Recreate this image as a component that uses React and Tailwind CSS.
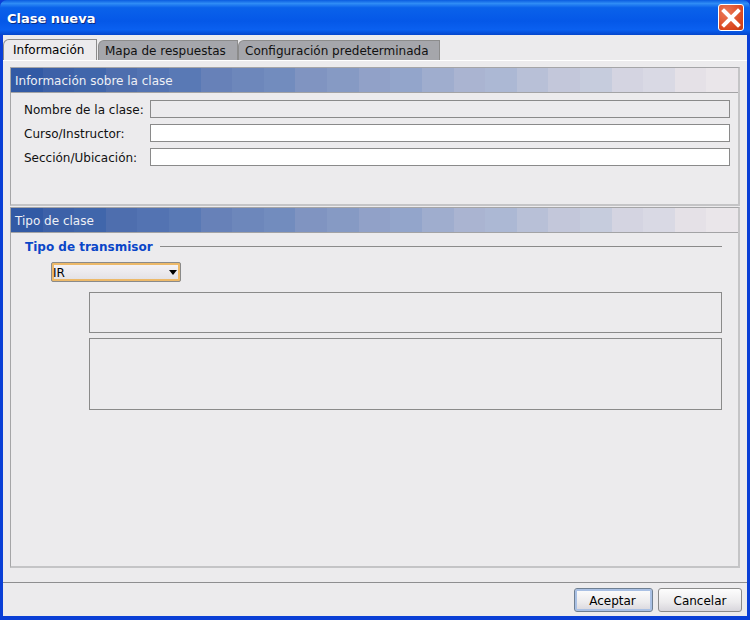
import React from "react";

const font = { fontFamily: '"DejaVu Sans", sans-serif' };

// the header gradient is drawn in faint bands
const bandCount = 23;
const nudge = [0, 1, -1, 1, 0, -1, 1, 0, -1, 1, 0, 1, -1, 0, 1, -1, 0, 1, -1, 1, 0, 1, 0];
const bands = Array.from({ length: bandCount }, (_, i) => {
  const t = i / (bandCount - 1);
  const r = Math.round(50 + (234 - 50) * t + nudge[i] * 3);
  const g = Math.round(90 + (230 - 90) * t + nudge[i]);
  const b = Math.round(165 + (234 - 165) * t);
  const from = ((i / bandCount) * 100).toFixed(2);
  const to = (((i + 1) / bandCount) * 100).toFixed(2);
  return `rgb(${r},${g},${b}) ${from}% ${to}%`;
});
const bandStyle = { background: `linear-gradient(90deg, ${bands.join(", ")})` };

function Tab({ label, active, className }) {
  return (
    <div
      className={`relative h-5 flex items-center border-t border-r border-[#8c8c8c] rounded-tl-[6px] border-l text-[12px] ${
        active ? "bg-[#ecebed] text-black h-[21px] border-b-0 z-10" : "bg-[#a5a6ab] text-[#111]"
      } ${className}`}
    >
      {label}
    </div>
  );
}

function SectionHeader({ children }) {
  return (
    <div style={bandStyle} className="h-[25px] flex items-center pl-1 pt-[2px] text-[12px] text-[#eef0f6] border-b border-[#a3a3a5]">
      {children}
    </div>
  );
}

function Field({ label, disabled }) {
  return (
    <div className="flex items-center h-[18px] mb-[6px]">
      <div className="w-[126px] pt-[2px] text-[12px] text-[#111] whitespace-nowrap">{label}</div>
      <div className={`h-[18px] flex-1 border border-[#8a8a8a] ${disabled ? "bg-[#ecebed]" : "bg-white"}`} />
    </div>
  );
}

export default function App() {
  return (
    <div style={font} className="w-[750px] h-[620px] flex flex-col bg-[#0a3fd6] overflow-hidden">
      {/* title bar */}
      <div className="h-[35px] shrink-0 flex items-center justify-between pl-[7px] pr-[6px] rounded-t-[7px] bg-[linear-gradient(180deg,#0a5ce0_0%,#2f8cf5_10%,#0a62ea_22%,#0558e8_60%,#0a60f0_85%,#0446cc_100%)]">
        <div className="pt-[2px] text-[13px] font-bold text-white [text-shadow:1px_1px_0_#0a2a80]">Clase nueva</div>
        <div className="w-[26px] h-[27px] rounded-[3px] border border-white bg-[radial-gradient(circle_at_30%_30%,#ec7a58,#d9461f_70%,#c23a14)] flex items-center justify-center">
          <svg width="24" height="24" viewBox="0 0 24 24">
            <path d="M5 5 L19 19 M19 5 L5 19" stroke="#ffffff" strokeWidth="4" strokeLinecap="square" fill="none" />
          </svg>
        </div>
      </div>

      {/* window body */}
      <div className="flex-1 flex flex-col mx-[3px] mb-[4px] bg-[#ecebed] min-h-0">
        {/* tabs */}
        <div className="h-[25px] shrink-0 flex items-end">
          <Tab label="Información" active className="w-[94px] pl-[9px]" />
          <Tab label="Mapa de respuestas" className="w-[140px] ml-[1px] pl-[6px]" />
          <Tab label="Configuración predeterminada" className="w-[202px] pl-[6px]" />
        </div>

        <div className="flex-1 flex flex-col border-t border-white px-[7px] pt-[6px] pb-[14px] min-h-0">
          {/* first panel */}
          <div className="h-[139px] shrink-0 border border-[#a5a5a7] border-b-2 border-r-2 border-b-[#c4c4c6] border-r-[#c4c4c6]">
            <SectionHeader>Información sobre la clase</SectionHeader>
            <div className="pt-[7px] pl-[13px] pr-[8px]">
              <Field label="Nombre de la clase:" disabled />
              <Field label="Curso/Instructor:" />
              <Field label="Sección/Ubicación:" />
            </div>
          </div>

          {/* second panel */}
          <div className="flex-1 mt-[1px] border border-[#a5a5a7] border-b-2 border-r-2 border-b-[#c4c4c6] border-r-[#c4c4c6]">
            <SectionHeader>Tipo de clase</SectionHeader>
            <div className="pl-[14px] pr-[16px]">
              <div className="flex items-center h-[26px]">
                <span className="pt-[2px] text-[12px] font-bold text-[#0a46c8]">Tipo de transmisor</span>
                <div className="flex-1 h-px bg-[#8a8a8a] ml-[7px]" />
              </div>
              <div className="ml-[26px] mt-[3px] w-[130px] h-[20px] rounded-[2px] border border-[#8a8a8a] p-[2px] bg-[#edb969]">
                <div className="h-full flex items-center justify-between pr-[1px] text-[12px] text-black bg-[linear-gradient(180deg,#f4f2f5,#e4e2e6)]">
                  <span className="pt-[1px] -ml-[1px]">IR</span>
                  <svg width="8" height="5" viewBox="0 0 8 5"><path d="M0 0 H8 L4 5 Z" fill="#000" /></svg>
                </div>
              </div>
              <div className="ml-[64px] mt-[10px] h-[41px] border border-[#8a8a8a]" />
              <div className="ml-[64px] mt-[5px] h-[72px] border border-[#8a8a8a]" />
            </div>
          </div>
        </div>

        {/* footer */}
        <div className="h-[34px] shrink-0 border-t border-[#8e8e90] flex items-start justify-end gap-[5px] pt-[5px] pr-[5px]">
          <button className="w-[79px] h-[24px] pt-[2px] pr-[2px] rounded-[3px] border border-[#6f7f92] text-[12px] text-black bg-[linear-gradient(180deg,#fdfdfd,#ecebed_60%,#d8d6dc)] shadow-[inset_0_0_0_2px_#a9c0e4]">
            Aceptar
          </button>
          <button className="w-[84px] h-[24px] pt-[2px] rounded-[3px] border border-[#8a8a8a] text-[12px] text-black bg-[linear-gradient(180deg,#fdfdfd,#ecebed_60%,#d8d6dc)]">
            Cancelar
          </button>
        </div>
      </div>
    </div>
  );
}
